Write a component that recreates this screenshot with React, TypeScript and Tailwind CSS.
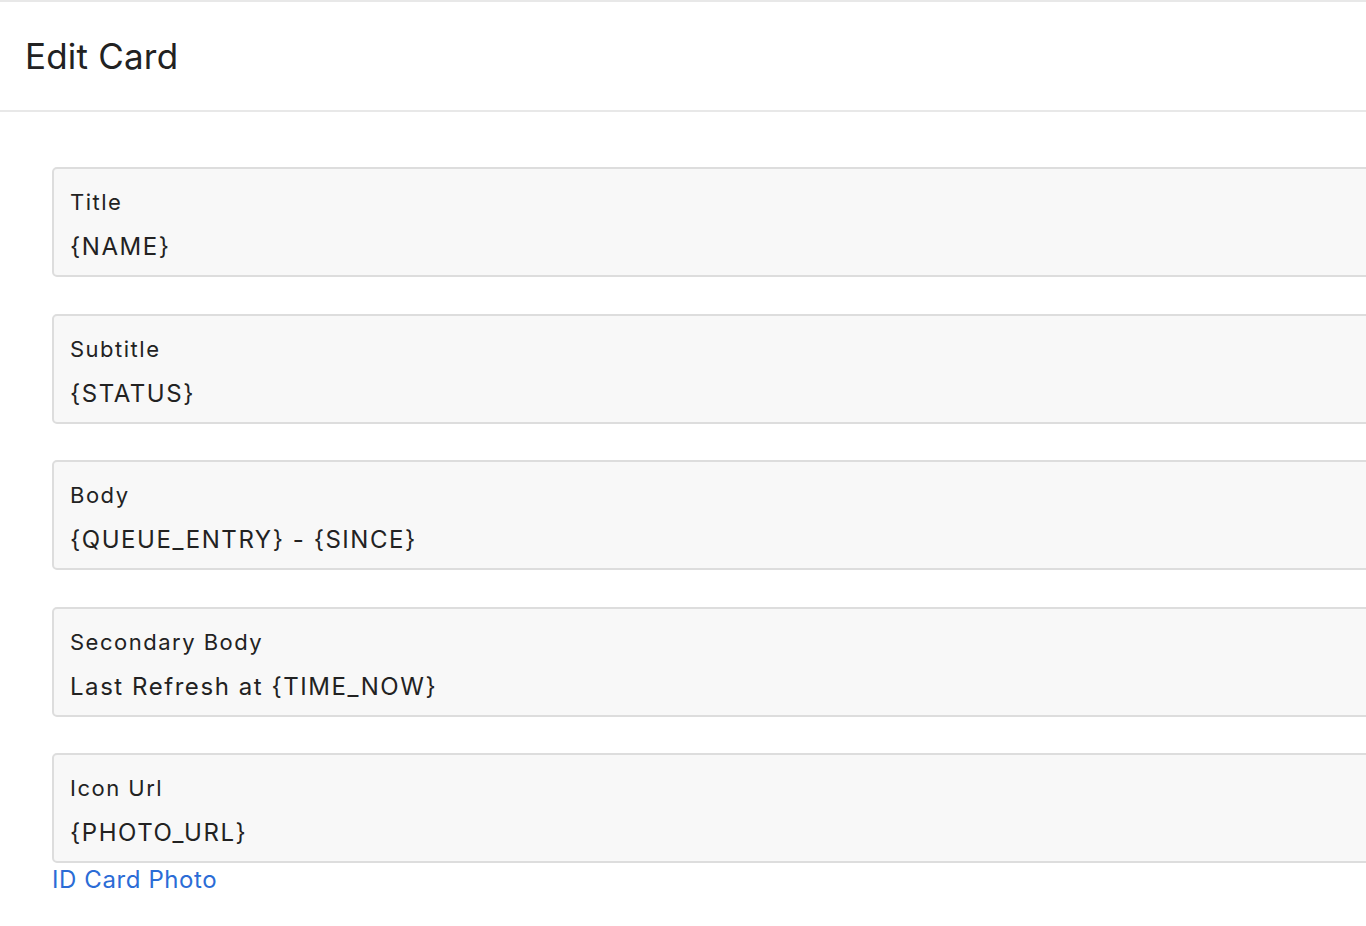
const fields = [
  { label: "Title", value: "{NAME}" },
  { label: "Subtitle", value: "{STATUS}" },
  { label: "Body", value: "{QUEUE_ENTRY} - {SINCE}" },
  { label: "Secondary Body", value: "Last Refresh at {TIME_NOW}" },
  { label: "Icon Url", value: "{PHOTO_URL}" },
];

function Field({ label, value }: { label: string; value: string }) {
  return (
    <div className="h-[110px] w-[1400px] rounded-[5px] border-2 border-[#dddddd] bg-[#f8f8f8] pl-4 pt-[19px]">
      <div className="text-[22px] leading-[28px] tracking-[1.5px] text-[#222]">{label}</div>
      <div className="mt-[15px] text-[24px] leading-[32px] tracking-[1.55px] text-[#222]">{value}</div>
    </div>
  );
}

export default function App() {
  return (
    <div className="min-h-[926px] w-[1366px] overflow-hidden bg-white font-['Inter','Liberation_Sans',sans-serif]">
      <div className="flex h-[112px] items-center border-t-2 border-b-2 border-[#e8e8e8] pl-[25px]">
        <h1 className="text-[35px] leading-[44px] tracking-[0.2px] text-[#222]">Edit Card</h1>
      </div>
      <div className="flex flex-col gap-[36.5px] pl-[52px] pt-[55px]">
        {fields.map((f, i) =>
          i === fields.length - 1 ? (
            <div key={f.label}>
              <Field {...f} />
              <a href="#" className="block text-[24px] leading-[34px] tracking-[0.6px] text-[#2b6cd6]">
                ID Card Photo
              </a>
            </div>
          ) : (
            <Field key={f.label} {...f} />
          )
        )}
      </div>
    </div>
  );
}
